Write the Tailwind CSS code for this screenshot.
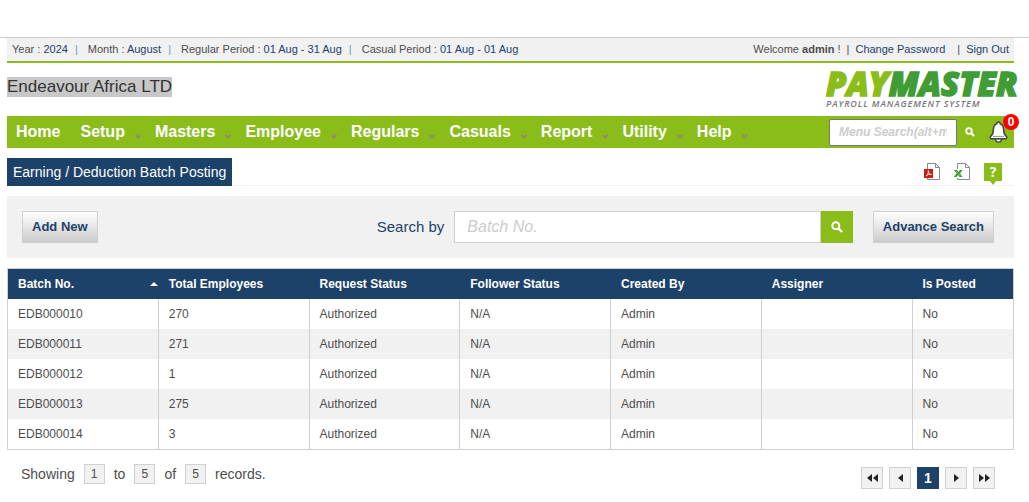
<!DOCTYPE html>
<html lang="en">
<head>
    <meta charset="UTF-8">
    <meta name="viewport" content="width=device-width, initial-scale=1.0">
    <title>Paymaster - Earning / Deduction Batch Posting</title>
    <script src="https://cdn.jsdelivr.net/npm/@tailwindcss/browser@4"></script>
</head>
<body class="bg-white font-['Liberation_Sans',Arial,sans-serif] text-xs text-[#4d4d4d]">
    <div class="mt-[37px] border-t border-[#cccccc] pl-[7px] pr-[15px]">

        <!-- Period / user bar -->
        <div class="flex items-center justify-between h-[25px] px-[5px] bg-[#f1f1f1] border-b-2 border-[#8abd1a] text-[11px]">
            <div class="flex items-center gap-[7px] whitespace-nowrap">
                <span>Year : <span class="text-[#1d426a]">2024</span></span>
                <span class="mr-[3px] text-[#6a9cc0]">|</span>
                <span>Month : <span class="text-[#1d426a]">August</span></span>
                <span class="mr-[3px] text-[#6a9cc0]">|</span>
                <span>Regular Period : <span class="text-[#1d426a]">01 Aug - 31 Aug</span></span>
                <span class="mr-[3px] text-[#6a9cc0]">|</span>
                <span>Casual Period : <span class="text-[#1d426a]">01 Aug - 01 Aug</span></span>
            </div>
            <div class="flex items-center gap-[6px] whitespace-nowrap">
                <span>Welcome <b>admin</b> !</span>
                <span>|</span>
                <a href="#" class="text-[#1d426a] pr-[6px]">Change Password</a>
                <span>|</span>
                <a href="#" class="text-[#1d426a]">Sign Out</a>
            </div>
        </div>

        <!-- Company and logo -->
        <header class="flex justify-between h-[53px]">
            <h1 class="mt-[14px] h-5 leading-5 bg-[#c8c8c8] text-[17px] text-[#333333]">Endeavour Africa LTD</h1>
            <div class="mt-[7px] w-[188px] italic whitespace-nowrap font-['Open_Sans',sans-serif]">
                <div class="h-[28px] leading-[28px] text-[33px] font-extrabold text-[#409d35] [-webkit-text-stroke:1.5px_#409d35]"><span class="text-[#8abd1a] [-webkit-text-stroke:1.5px_#8abd1a]">PAY</span>MASTER</div>
                <div class="h-3 leading-3 text-[9px] font-semibold tracking-widest text-[#777777]">PAYROLL MANAGEMENT SYSTEM</div>
            </div>
        </header>

        <!-- Main menu -->
        <nav class="flex items-center justify-between h-8 bg-[#8abd1a]">
            <ul class="flex items-center pl-[9px] text-base font-bold text-white whitespace-nowrap">
                <li class="mr-5"><a href="#">Home</a></li>
                <li class="mr-[14px]"><a href="#" class="flex items-center gap-[10px]">Setup <svg class="w-[6px] h-[5px] mt-2" viewBox="0 0 6 5"><path d="M0.5 1 3 3.5 5.5 1" fill="none" stroke="#8c9070" stroke-width="2"/></svg></a></li>
                <li class="mr-[14px]"><a href="#" class="flex items-center gap-[10px]">Masters <svg class="w-[6px] h-[5px] mt-2" viewBox="0 0 6 5"><path d="M0.5 1 3 3.5 5.5 1" fill="none" stroke="#8c9070" stroke-width="2"/></svg></a></li>
                <li class="mr-[14px]"><a href="#" class="flex items-center gap-[10px]">Employee <svg class="w-[6px] h-[5px] mt-2" viewBox="0 0 6 5"><path d="M0.5 1 3 3.5 5.5 1" fill="none" stroke="#8c9070" stroke-width="2"/></svg></a></li>
                <li class="mr-[14px]"><a href="#" class="flex items-center gap-[10px]">Regulars <svg class="w-[6px] h-[5px] mt-2" viewBox="0 0 6 5"><path d="M0.5 1 3 3.5 5.5 1" fill="none" stroke="#8c9070" stroke-width="2"/></svg></a></li>
                <li class="mr-[14px]"><a href="#" class="flex items-center gap-[10px]">Casuals <svg class="w-[6px] h-[5px] mt-2" viewBox="0 0 6 5"><path d="M0.5 1 3 3.5 5.5 1" fill="none" stroke="#8c9070" stroke-width="2"/></svg></a></li>
                <li class="mr-[14px]"><a href="#" class="flex items-center gap-[10px]">Report <svg class="w-[6px] h-[5px] mt-2" viewBox="0 0 6 5"><path d="M0.5 1 3 3.5 5.5 1" fill="none" stroke="#8c9070" stroke-width="2"/></svg></a></li>
                <li class="mr-[14px]"><a href="#" class="flex items-center gap-[10px]">Utility <svg class="w-[6px] h-[5px] mt-2" viewBox="0 0 6 5"><path d="M0.5 1 3 3.5 5.5 1" fill="none" stroke="#8c9070" stroke-width="2"/></svg></a></li>
                <li><a href="#" class="flex items-center gap-[10px]">Help <svg class="w-[6px] h-[5px] mt-2" viewBox="0 0 6 5"><path d="M0.5 1 3 3.5 5.5 1" fill="none" stroke="#8c9070" stroke-width="2"/></svg></a></li>
            </ul>
            <div class="flex items-center pr-[6px]">
                <input type="text" aria-label="Menu Search" placeholder="Menu Search(alt+m)" class="w-32 h-[27px] px-[9px] bg-white border border-[#767676] rounded-xs text-xs font-bold placeholder:italic placeholder:text-[#cccccc]">
                <button type="button" aria-label="Search menu" class="ml-2 mr-[14px]">
                    <svg class="w-[10px] h-[10px]" viewBox="0 0 12 12"><circle cx="4.8" cy="4.8" r="3.4" fill="none" stroke="#ffffff" stroke-width="2.2"/><path d="M7.3 7.3 10.8 10.8" stroke="#ffffff" stroke-width="2.6"/></svg>
                </button>
                <button type="button" aria-label="Notifications" class="relative">
                    <svg class="w-[19px] h-[22px]" viewBox="0 0 19 22"><path d="M6.5 17.5h6q0 3.700-3 3.700t-3-3.700z" fill="#ffffff" stroke="#444444" stroke-width="1.300"/><path d="M9.500 1c-1.100 0-1.700.7-1.700 1.800C5.400 3.700 4.400 5.800 4.400 8.500c0 3.800-.8 5.300-2.700 6.800-.9.800-.6 2.500.8 2.500h14c1.400 0 1.700-1.700.8-2.500-1.900-1.500-2.700-3-2.700-6.800 0-2.700-1-4.800-3.400-5.700C11.200 1.700 10.600 1 9.500 1z" fill="#ffffff" stroke="#444444" stroke-width="1.500"/><path d="M4 15.400h11" stroke="#777777" stroke-width=".8"/></svg>
                    <span class="absolute -top-[7px] -right-[11px] w-4 h-4 leading-4 rounded-full bg-[#ff0000] text-white text-xs font-bold text-center">0</span>
                </button>
            </div>
        </nav>

        <!-- Page title -->
        <div class="flex items-start justify-between mt-[10px] h-7 border-b border-[#f1f1f1]">
            <h2 class="h-7 leading-7 px-[6px] bg-[#1d426a] text-white text-sm">Earning / Deduction Batch Posting</h2>
            <div class="flex items-start gap-[14px] pt-[5px] pr-3">
                <button type="button" aria-label="Export to PDF">
                    <svg class="w-4 h-[17px]" viewBox="0 0 16 17"><path d="M3.500.500h8l4 4v12h-12z M11.500.500v4h4" fill="#ffffff" stroke="#888888"/><path d="M0 6h9v9H0z" fill="#c8200e"/><path d="M2 13c2-1 2.500-3 2.300-5.500C4.500 10 5.500 11.500 7.500 11.500 5.500 11 3.500 11.500 2 13z" fill="none" stroke="#ffffff" stroke-width=".8"/></svg>
                </button>
                <button type="button" aria-label="Export to Excel">
                    <svg class="w-4 h-[17px]" viewBox="0 0 16 17"><path d="M3.500.500h8l4 4v12h-12z M11.500.500v4h4" fill="#ffffff" stroke="#888888"/><path d="M0 6h9v9H0z" fill="#ffffff"/><path d="M0 7h3l1.500 2L6 7h2.500L6 10.500 8.500 14H5.500L4 12l-1.500 2H0l2.500-3.500z" fill="#3a9233"/><path d="M1.500 7.800 6.800 13.300" stroke="#b5dcae" stroke-width=".7"/></svg>
                </button>
                <button type="button" aria-label="Help">
                    <span class="block w-[18px] h-[18px] leading-[18px] bg-[#8abd1a] text-white text-sm font-bold font-['Open_Sans',sans-serif] text-center">?</span>
                    <svg class="block mx-auto w-[6px] h-[4px]" viewBox="0 0 6 4"><path d="M0 0h6L3 4z" fill="#8abd1a"/></svg>
                </button>
            </div>
        </div>

        <!-- Search panel -->
        <form class="flex items-center mt-[10px] h-[62px] pl-[15px] pr-5 bg-[#f1f1f1]">
            <button type="button" class="h-8 px-[9px] border border-[#d0d0d0] bg-linear-to-b from-white to-[#cccccc] text-[13px] font-bold text-[#1d426a] whitespace-nowrap">Add New</button>
            <label for="batchNo" class="ml-auto mr-[10px] text-[15px] text-[#1d426a]">Search by</label>
            <div class="flex w-[41%] mr-5">
                <input id="batchNo" type="text" placeholder="Batch No." class="flex-1 min-w-0 h-8 px-3 bg-white border border-[#d0d0d0] text-base placeholder:italic placeholder:text-[#cccccc]">
                <button type="submit" aria-label="Search" class="flex items-center justify-center w-8 h-8 bg-[#8abd1a]">
                    <svg class="w-3 h-3" viewBox="0 0 12 12"><circle cx="4.800" cy="4.800" r="3.500" fill="none" stroke="#ffffff" stroke-width="2"/><path d="M7.300 7.300 11 11" stroke="#ffffff" stroke-width="2.400"/></svg>
                </button>
            </div>
            <button type="button" class="h-8 px-[9px] border border-[#d0d0d0] bg-linear-to-b from-white to-[#cccccc] text-[13px] font-bold text-[#1d426a] whitespace-nowrap">Advance Search</button>
        </form>

        <!-- Batches -->
        <table class="mt-[10px] w-full table-fixed border-separate border-spacing-0 border border-[#d0d0d0]">
            <thead>
                <tr class="h-[30px] bg-[#1d426a] text-left text-white">
                    <th class="w-[15%] px-[10px]"><span class="flex items-center justify-between -mr-[9px]">Batch No. <svg class="w-2 h-1" viewBox="0 0 8 4"><path d="M0 4h8L4 0z" fill="#ffffff"/></svg></span></th>
                    <th class="w-[15%] px-[10px]">Total Employees</th>
                    <th class="w-[15%] px-[10px]">Request Status</th>
                    <th class="w-[15%] px-[10px]">Follower Status</th>
                    <th class="w-[15%] px-[10px]">Created By</th>
                    <th class="w-[15%] px-[10px]">Assigner</th>
                    <th class="w-[10%] px-[10px]">Is Posted</th>
                </tr>
            </thead>
            <tbody class="[&_td]:px-[10px] [&_td]:border-r [&_td]:border-[#d0d0d0] [&_td:last-child]:border-r-0 [&_tr]:h-[30px] [&_tr]:even:bg-[#f1f1f1]">
                <tr><td>EDB000010</td><td>270</td><td>Authorized</td><td>N/A</td><td>Admin</td><td></td><td>No</td></tr>
                <tr><td>EDB000011</td><td>271</td><td>Authorized</td><td>N/A</td><td>Admin</td><td></td><td>No</td></tr>
                <tr><td>EDB000012</td><td>1</td><td>Authorized</td><td>N/A</td><td>Admin</td><td></td><td>No</td></tr>
                <tr><td>EDB000013</td><td>275</td><td>Authorized</td><td>N/A</td><td>Admin</td><td></td><td>No</td></tr>
                <tr><td>EDB000014</td><td>3</td><td>Authorized</td><td>N/A</td><td>Admin</td><td></td><td>No</td></tr>
            </tbody>
        </table>

        <!-- Paging -->
        <div class="flex items-start justify-between mt-[14px] pl-[14px] pr-[19px]">
            <div class="flex items-center gap-[9px] text-sm">
                <span>Showing</span>
                <span class="w-[21px] h-5 leading-[18px] border border-[#d0d0d0] bg-[#f1f1f1] text-xs text-center">1</span>
                <span>to</span>
                <span class="w-[21px] h-5 leading-[18px] border border-[#d0d0d0] bg-[#f1f1f1] text-xs text-center">5</span>
                <span>of</span>
                <span class="w-[21px] h-5 leading-[18px] border border-[#d0d0d0] bg-[#f1f1f1] text-xs text-center">5</span>
                <span>records.</span>
            </div>
            <div class="flex gap-[6px] mt-[3px]">
                <button type="button" aria-label="First page" class="flex items-center justify-center w-[22px] h-[22px] border border-[#d0d0d0] bg-[#f1f1f1]"><svg class="w-[11px] h-2" viewBox="0 0 11 8"><path d="M5 0v8L0 4zM11 0v8L6 4z" fill="#222222"/></svg></button>
                <button type="button" aria-label="Previous page" class="flex items-center justify-center w-[22px] h-[22px] border border-[#d0d0d0] bg-[#f1f1f1]"><svg class="w-[5px] h-2" viewBox="0 0 5 8"><path d="M5 0v8L0 4z" fill="#222222"/></svg></button>
                <button type="button" class="w-[22px] h-[22px] bg-[#1d426a] text-white text-sm font-bold">1</button>
                <button type="button" aria-label="Next page" class="flex items-center justify-center w-[22px] h-[22px] border border-[#d0d0d0] bg-[#f1f1f1]"><svg class="w-[5px] h-2" viewBox="0 0 5 8"><path d="M0 0v8l5-4z" fill="#222222"/></svg></button>
                <button type="button" aria-label="Last page" class="flex items-center justify-center w-[22px] h-[22px] border border-[#d0d0d0] bg-[#f1f1f1]"><svg class="w-[11px] h-2" viewBox="0 0 11 8"><path d="M0 0v8l5-4zM6 0v8l5-4z" fill="#222222"/></svg></button>
            </div>
        </div>
    </div>
</body>
</html>
